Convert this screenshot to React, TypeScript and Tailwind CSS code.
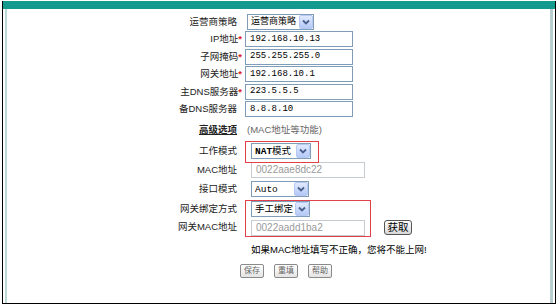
import React from "react";

const font = "font-['Liberation_Sans','Noto_Sans_CJK_SC',sans-serif]";
const mono = "font-['Liberation_Mono','Noto_Sans_CJK_SC',monospace]";
const labelCls = "w-[235px] shrink-0 text-right text-[#222]";

function Arrow() {
  return (
    <div className="w-[14px] h-[14px] shrink-0 rounded-[2px] border border-[#b7c9f3] bg-gradient-to-b from-[#e1eafe] to-[#b4c9f7] flex items-center justify-center">
      <svg width="8" height="6" viewBox="0 0 8 6">
        <path d="M1 1.5 L4 4.5 L7 1.5" fill="none" stroke="#4a5f8c" strokeWidth="1.8" />
      </svg>
    </div>
  );
}

function Select({ w, children, className = "" }: { w: string; children: React.ReactNode; className?: string }) {
  return (
    <div className={`h-[16px] ${w} border border-[#7f9db9] bg-white flex items-center ${className}`}>
      <span className="flex-1 pl-[3px] text-black whitespace-nowrap leading-none">{children}</span>
      <Arrow />
    </div>
  );
}

function Input({ value, w, disabled }: { value: string; w: string; disabled?: boolean }) {
  return (
    <div
      className={`h-[16px] ${w} border bg-white flex items-center pl-[4px] leading-none whitespace-nowrap ${
        disabled ? "border-[#c6cbd0] text-[#9a9a9a] text-[10px]" : `border-[#7f9db9] text-black text-[9px] ${mono}`
      }`}
    >
      {value}
    </div>
  );
}

function Req() {
  return <span className="text-[#e02020] font-bold">*</span>;
}

function SmallBtn({ children }: { children: React.ReactNode }) {
  return (
    <div className="h-[14px] w-[24px] rounded-[2px] border border-[#8a8a8a] bg-gradient-to-b from-white to-[#e4e4e4] flex items-center justify-center text-[8px] text-[#666] leading-none">
      {children}
    </div>
  );
}

export default function App() {
  const rows1 = [
    { label: "IP地址", value: "192.168.10.13" },
    { label: "子网掩码", value: "255.255.255.0" },
    { label: "网关地址", value: "192.168.10.1" },
    { label: "主DNS服务器", value: "223.5.5.5" },
  ];

  return (
    <div className={`w-[559px] h-[306px] bg-white pt-[1px] pl-[2px] ${font} text-[9.5px]`}>
      <div className="w-[554px] h-[303px] border-x border-b border-black flex flex-col">
        <div className="h-[8px] bg-[#13998d]" />
        <div className="flex-1 flex">
          <div className="w-[2px] ml-[2px] bg-[#bcdada]" />
          <div className="flex-1 relative flex flex-col pt-[4px]">
            <div className="h-[17.5px] flex items-center">
              <div className={`${labelCls} pr-[5px]`}>运营商策略</div>
              <Select w="w-[67px]" className="ml-[5px] text-[9px]">运营商策略</Select>
            </div>
            {rows1.map((r) => (
              <div key={r.label} className="h-[17.5px] flex items-center">
                <div className={labelCls}>
                  {r.label}
                  <Req />
                </div>
                <div className="ml-[3px]">
                  <Input value={r.value} w="w-[108px]" />
                </div>
              </div>
            ))}
            <div className="h-[17.5px] flex items-center">
              <div className={`${labelCls} pr-[5px]`}>备DNS服务器</div>
              <div className="ml-[3px]">
                <Input value="8.8.8.10" w="w-[108px]" />
              </div>
            </div>

            <div className="h-[23.5px] flex items-center">
              <div className={`${labelCls} pr-[5px]`}>
                <span className="font-bold underline">高级选项</span>
              </div>
              <div className="ml-[5px] text-[#666]">(MAC地址等功能)</div>
            </div>

            <div className="h-[19.5px] flex items-center">
              <div className={`${labelCls} pr-[5px]`}>工作模式</div>
              <Select w="w-[60px]" className="ml-[9px]">
                <span className={`${mono} font-bold`}>NAT</span>模式
              </Select>
            </div>
            <div className="h-[18.5px] flex items-center">
              <div className={`${labelCls} pr-[5px]`}>MAC地址</div>
              <div className="ml-[9px]">
                <Input value="0022aae8dc22" w="w-[114px]" disabled />
              </div>
            </div>
            <div className="h-[19.5px] flex items-center">
              <div className={`${labelCls} pr-[5px]`}>接口模式</div>
              <Select w="w-[58px]" className="ml-[9px]">
                <span className={mono}>Auto</span>
              </Select>
            </div>
            <div className="h-[19.5px] flex items-center">
              <div className={`${labelCls} pr-[5px]`}>网关绑定方式</div>
              <Select w="w-[59px]" className="ml-[9px] text-[9.5px]">手工绑定</Select>
            </div>
            <div className="h-[18px] flex items-center">
              <div className={`${labelCls} pr-[5px]`}>网关MAC地址</div>
              <div className="ml-[9px]">
                <Input value="0022aadd1ba2" w="w-[114px]" disabled />
              </div>
              <div className="ml-[19px] h-[15px] w-[28px] rounded-[3px] border border-[#555] bg-gradient-to-b from-white to-[#d8d8d8] flex items-center justify-center text-[10.5px] text-black leading-none">
                获取
              </div>
            </div>

            <div className="h-[26.5px] flex items-center">
              <div className="w-[235px] shrink-0" />
              <div className="ml-[9px] text-black">如果MAC地址填写不正确，您将不能上网!</div>
            </div>

            <div className="h-[16.5px] flex items-center pl-[233px] gap-[10px]">
              <SmallBtn>保存</SmallBtn>
              <SmallBtn>重填</SmallBtn>
              <SmallBtn>帮助</SmallBtn>
            </div>

            <div className="absolute left-[238px] top-[132px] w-[74px] h-[22px] border border-[#e0404a]" />
            <div className="absolute left-[238px] top-[191px] w-[126px] h-[37px] border border-[#e0404a]" />
          </div>
          <div className="w-[3px] mr-[2px] bg-[#b9cfcf]" />
        </div>
      </div>
    </div>
  );
}
